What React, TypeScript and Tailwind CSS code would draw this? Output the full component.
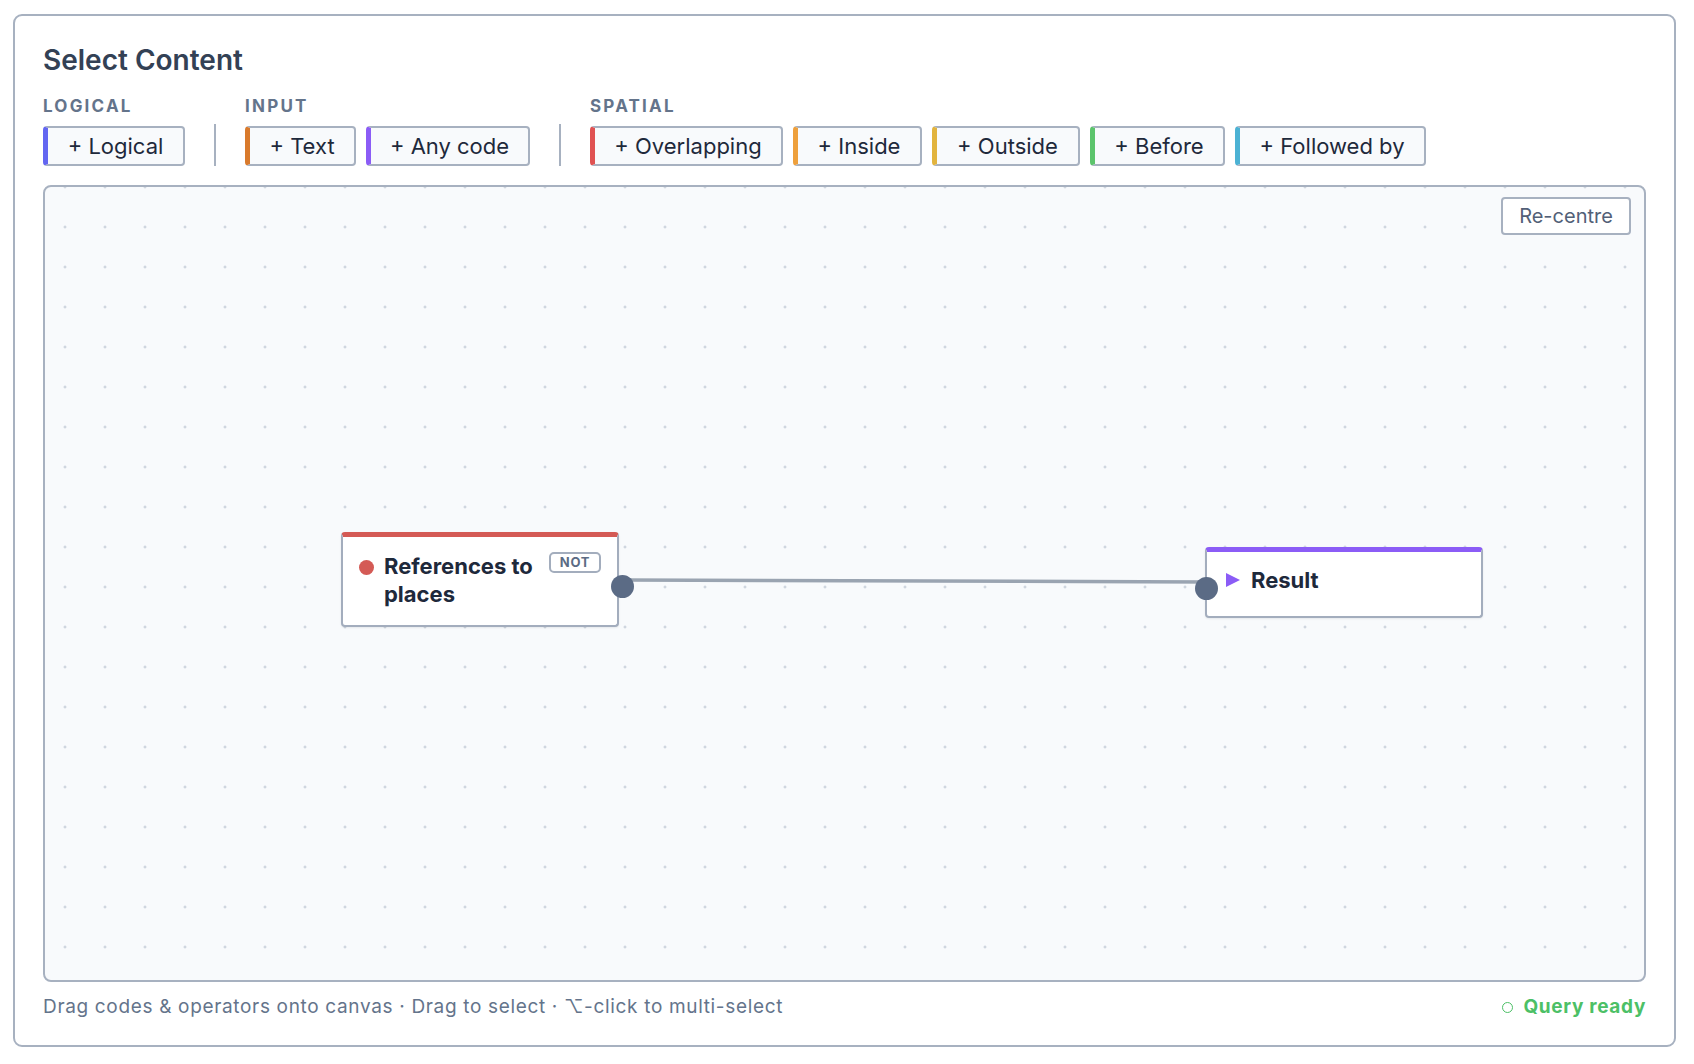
import React from "react";

type Chip = { label: string; color: string; width: string };

const groups: { title: string; chips: Chip[] }[] = [
  {
    title: "LOGICAL",
    chips: [{ label: "+ Logical", color: "border-l-[#6366f1]", width: "w-[142px]" }],
  },
  {
    title: "INPUT",
    chips: [
      { label: "+ Text", color: "border-l-[#d97a2c]", width: "w-[111px]" },
      { label: "+ Any code", color: "border-l-[#8b5cf6]", width: "w-[164px]" },
    ],
  },
  {
    title: "SPATIAL",
    chips: [
      { label: "+ Overlapping", color: "border-l-[#e05252]", width: "w-[193px]" },
      { label: "+ Inside", color: "border-l-[#eea03c]", width: "w-[129px]" },
      { label: "+ Outside", color: "border-l-[#e2b43e]", width: "w-[148px]" },
      { label: "+ Before", color: "border-l-[#5cc46c]", width: "w-[135px]" },
      { label: "+ Followed by", color: "border-l-[#4cb2d4]", width: "w-[191px]" },
    ],
  },
];

function ChipButton({ chip }: { chip: Chip }) {
  return (
    <button
      className={`h-[40px] ${chip.width} flex items-center justify-center rounded-[4px] border-2 border-[#a7b1c0] border-l-[5px] ${chip.color} bg-[#f8fafc] text-[22px] leading-none text-[#1e293b]`}
    >
      {chip.label}
    </button>
  );
}

function Toolbar() {
  return (
    <div className="mt-[19px] flex items-end gap-[29px]">
      {groups.map((g, i) => (
        <React.Fragment key={g.title}>
          {i > 0 && <div className="h-[42px] w-[2px] bg-[#a7b1c0]" />}
          <div className="flex flex-col">
            <div className="h-[20px] text-[17px] font-bold leading-[20px] tracking-[0.13em] text-[#64748b]">
              {g.title}
            </div>
            <div className="mt-[10px] flex gap-[10px]">
              {g.chips.map((c) => (
                <ChipButton key={c.label} chip={c} />
              ))}
            </div>
          </div>
        </React.Fragment>
      ))}
    </div>
  );
}

function Handle({ left, top }: { left: string; top: string }) {
  return (
    <div
      className={`absolute ${left} ${top} h-[23px] w-[23px] rounded-full bg-[#5b6b85]`}
    />
  );
}

function Canvas() {
  return (
    <div className="relative mt-[19px] h-[797px] w-full overflow-hidden rounded-[8px] border-2 border-[#a7b1c0] bg-[#f8fafc] [background-image:radial-gradient(circle,#cfd6df_1.3px,transparent_1.7px)] [background-size:40px_40px] [background-position:0px_-20px]">
      {/* edge between the two nodes */}
      <svg className="absolute left-0 top-0" width="1600" height="795">
        <line x1="578" y1="393" x2="1162" y2="395" stroke="#9aa4b1" strokeWidth="3.5" />
      </svg>

      {/* source node */}
      <div className="absolute left-[296px] top-[345px] h-[95px] w-[278px] rounded-[4px] border-2 border-t-[5px] border-[#a3adbd] border-t-[#d45a55] bg-white shadow-[0_1px_2px_rgba(15,23,42,0.08)]">
        <div className="flex items-start gap-[10px] px-[16px] pt-[15px]">
          <span className="mt-[8px] h-[15px] w-[15px] shrink-0 rounded-full bg-[#d45a55]" />
          <div className="whitespace-nowrap text-[22px] font-bold leading-[28px] text-[#1e293b]">
            References to
            <br />
            places
          </div>
          <span className="ml-auto flex h-[21px] w-[52px] items-center justify-center rounded-[5px] border-2 border-[#a3adbd] text-[13px] font-bold leading-none tracking-[0.06em] text-[#5b6b84]">
            NOT
          </span>
        </div>
      </div>

      {/* result node */}
      <div className="absolute left-[1160px] top-[360px] h-[71px] w-[278px] rounded-[4px] border-2 border-t-[5px] border-[#a3adbd] border-t-[#8b5cf6] bg-white shadow-[0_1px_2px_rgba(15,23,42,0.08)]">
        <div className="flex items-center gap-[11px] pl-[19px] pt-[14px]">
          <svg width="14" height="14" viewBox="0 0 14 14">
            <polygon points="0,0 14,7 0,14" fill="#8b5cf6" />
          </svg>
          <span className="text-[22px] font-bold leading-[28px] text-[#1e293b]">Result</span>
        </div>
      </div>

      <Handle left="left-[566px]" top="top-[388px]" />
      <Handle left="left-[1150px]" top="top-[390px]" />

      <button className="absolute right-[13px] top-[10px] flex h-[38px] w-[130px] items-center justify-center rounded-[4px] border-2 border-[#a7b1c0] bg-white text-[20px] leading-none text-[#526077]">
        Re-centre
      </button>
    </div>
  );
}

export default function App() {
  return (
    <div
      className="min-h-screen bg-white pl-[13px] pt-[14px]"
      style={{ fontFamily: 'Inter, "DejaVu Sans", sans-serif' }}
    >
      <div className="flex h-[1033px] w-[1663px] flex-col rounded-[9px] border-2 border-[#a7b1c0] bg-white px-[28px] pt-[27px]">
        <h1 className="text-[28px] font-semibold leading-[34px] text-[#334155]">Select Content</h1>
        <Toolbar />
        <Canvas />
        <div className="mt-[13px] flex items-center justify-between text-[19px] leading-[24px] tracking-[0.035em]">
          <span className="text-[#64748b]">
            Drag codes &amp; operators onto canvas · Drag to select · ⌥-click to multi-select
          </span>
          <span className="flex items-center gap-[10px] font-bold text-[#4cc066]">
            <span className="h-[11px] w-[11px] rounded-full border-[1.5px] border-[#4cc066]" />
            Query ready
          </span>
        </div>
      </div>
    </div>
  );
}
